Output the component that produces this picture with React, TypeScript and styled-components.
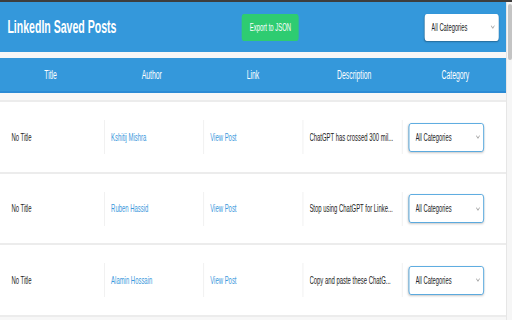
import React from "react";
import styled, { createGlobalStyle } from "styled-components";

const SCALE = 0.57;

const GlobalStyle = createGlobalStyle`
  html, body {
    margin: 0;
    padding: 0;
    overflow: hidden;
    background: #f7f7f7;
    font-family: "Liberation Sans", Arial, Helvetica, sans-serif;
  }
  * { box-sizing: border-box; }
`;

const Frame = styled.div`
  width: 512px;
  height: 320px;
  display: flex;
  flex-direction: column;
  overflow: hidden;
`;

const TopStrip = styled.div`
  height: 2px;
  flex: none;
  background: #3d3d3d;
`;

const Body = styled.div`
  flex: 1;
  min-height: 0;
  display: flex;
`;

const Viewport = styled.div`
  flex: 1;
  min-width: 0;
  overflow: hidden;
  background: #f7f7f7;
`;

const Page = styled.div`
  width: ${506 / SCALE}px;
  transform: scaleX(${SCALE});
  transform-origin: 0 0;
`;

const Header = styled.header`
  height: 50px;
  background: #3498db;
  display: flex;
  align-items: center;
  justify-content: space-between;
  padding: 0 13px;
`;

const Title = styled.h1`
  margin: 0;
  color: #fff;
  font-size: 18.5px;
  font-weight: 700;
  line-height: 1;
`;

const ExportButton = styled.button`
  width: 100px;
  height: 27px;
  border: none;
  border-radius: 4px;
  background: #2ecc71;
  color: #fff;
  font-family: inherit;
  font-size: 10.4px;
  padding: 0;
  cursor: pointer;
`;

const SelectWrap = styled.div<{ $w: number; $h: number }>`
  position: relative;
  width: ${(p) => p.$w}px;
  height: ${(p) => p.$h}px;
  flex: none;
`;

const Select = styled.select<{ $bordered?: boolean }>`
  appearance: none;
  -webkit-appearance: none;
  width: 100%;
  height: 100%;
  margin: 0;
  padding: 0 0 0 ${(p) => (p.$bordered ? 11 : 12)}px;
  font-family: inherit;
  font-size: 10.2px;
  color: #222;
  background: #fff;
  border: ${(p) => (p.$bordered ? "1.5px solid #3498db" : "none")};
  border-radius: 4px;
  box-shadow: ${(p) =>
    p.$bordered ? "0 1px 3px rgba(0,0,0,0.22)" : "0 1px 2px rgba(0,0,0,0.3)"};
  outline: none;
`;

const Chevron = styled.svg`
  position: absolute;
  right: 7px;
  top: 50%;
  transform: translateY(-50%);
  pointer-events: none;
`;

const TableHead = styled.div`
  margin-top: 6px;
  height: 35px;
  padding-top: 1px;
  background: #3498db;
  border-bottom: 2px solid #2b8ad4;
  display: grid;
  grid-template-columns: repeat(5, 1fr);
  align-items: center;
`;

const HeadCell = styled.div`
  color: #fff;
  font-size: 12px;
  text-align: center;
`;

const Rows = styled.div`
  margin-top: 7px;
  border-top: 2px solid #ececec;
`;

const Row = styled.div`
  display: grid;
  grid-template-columns: repeat(5, 1fr);
  padding: 18px 9px 17.7px;
  background: #fff;
  border-bottom: 2px solid #ececec;
`;

const Cell = styled.div<{ $sep?: boolean }>`
  height: 34px;
  min-width: 0;
  display: flex;
  align-items: center;
  padding: 0 11px;
  border-left: ${(p) => (p.$sep ? "1.5px solid #e6e6e6" : "none")};
  font-size: 10.4px;
  color: #222;
`;

const Truncated = styled.span`
  display: block;
  overflow: hidden;
  white-space: nowrap;
`;

const Link = styled.a`
  color: #3a98dc;
  text-decoration: none;
`;

const ScrollTrack = styled.div`
  width: 6px;
  flex: none;
  background: #f6f6f6;
  border-left: 1px solid #e6e6e6;
  padding: 2px 0 0 1px;
`;

const Thumb = styled.div`
  width: 4px;
  height: 56px;
  border-radius: 2px;
  background: #c4c4c4;
`;

const CategorySelect = ({ bordered }: { bordered?: boolean }) => (
  <SelectWrap $w={bordered ? 132 : 130} $h={bordered ? 29 : 27}>
    <Select $bordered={bordered} defaultValue="all">
      <option value="all">All Categories</option>
    </Select>
    <Chevron width="7" height="4" viewBox="0 0 7 4">
      <path d="M0.5 0.5 L3.5 3.3 L6.5 0.5" fill="none" stroke="#888" strokeWidth="0.9" />
    </Chevron>
  </SelectWrap>
);

const posts = [
  { author: "Kshitij Mishra", desc: "ChatGPT has crossed 300 mil..." },
  { author: "Ruben Hassid", desc: "Stop using ChatGPT for Linke..." },
  { author: "Alamin Hossain", desc: "Copy and paste these ChatG..." },
];

export default function App() {
  return (
    <>
      <GlobalStyle />
      <Frame>
        <TopStrip />
        <Body>
          <Viewport>
            <Page>
              <Header>
                <Title>LinkedIn Saved Posts</Title>
                <ExportButton>Export to JSON</ExportButton>
                <CategorySelect />
              </Header>
              <TableHead>
                <HeadCell>Title</HeadCell>
                <HeadCell>Author</HeadCell>
                <HeadCell>Link</HeadCell>
                <HeadCell>Description</HeadCell>
                <HeadCell>Category</HeadCell>
              </TableHead>
              <Rows>
                {posts.map((p) => (
                  <Row key={p.author}>
                    <Cell>No Title</Cell>
                    <Cell $sep>
                      <Link href="#">{p.author}</Link>
                    </Cell>
                    <Cell $sep>
                      <Link href="#">View Post</Link>
                    </Cell>
                    <Cell $sep>
                      <Truncated>{p.desc}</Truncated>
                    </Cell>
                    <Cell $sep>
                      <CategorySelect bordered />
                    </Cell>
                  </Row>
                ))}
              </Rows>
            </Page>
          </Viewport>
          <ScrollTrack>
            <Thumb />
          </ScrollTrack>
        </Body>
      </Frame>
    </>
  );
}
